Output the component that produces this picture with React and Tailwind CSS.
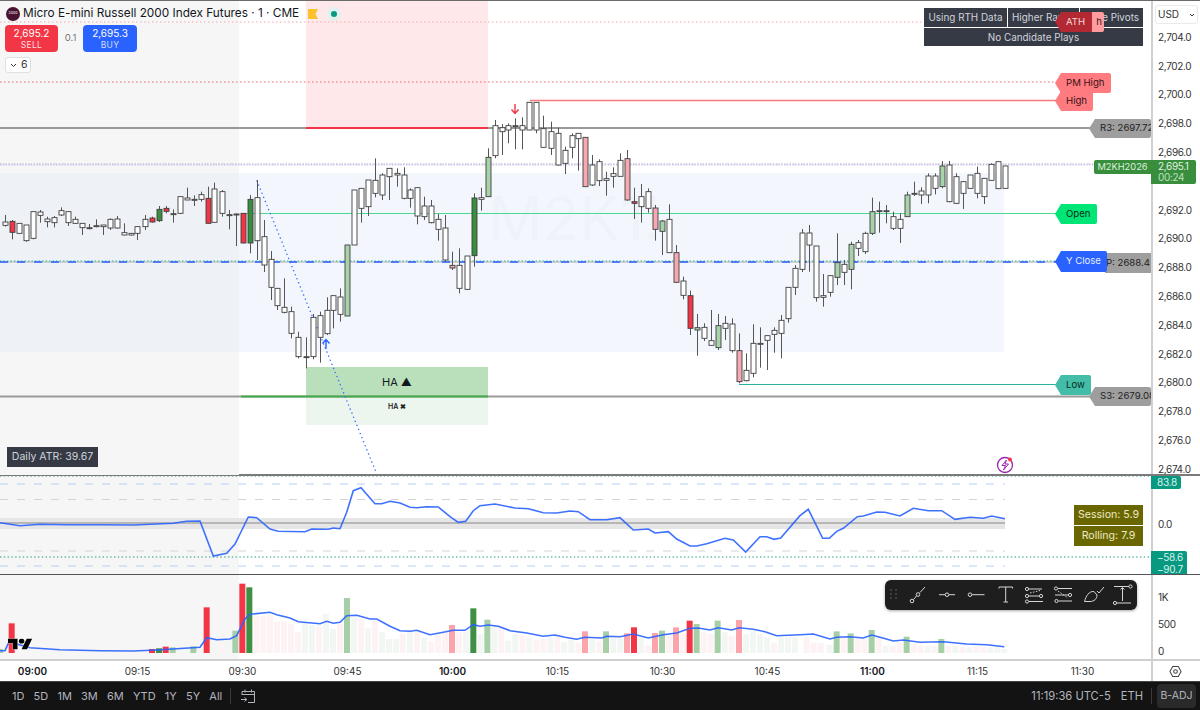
import React from 'react';

const sec = (xo, yo, rows) => rows.map(([zx, bt, bb, wt, wb, t]) => ({
  x: Math.round(xo + zx / 3) + 0.5, bt: yo + bt / 3, bb: yo + bb / 3, wt: yo + wt / 3, wb: yo + wb / 3, t: t || 'w',
}));

const candles = [
  ...sec(0, 0, [
    [15, 666, 676, 645, 680], [36, 664, 697, 660, 718, 'r'], [57, 670, 700, 670, 700], [77, 675, 722, 675, 725],
    [98, 635, 715, 635, 718], [119, 636, 646, 630, 668], [140, 657, 665, 650, 682], [161, 653, 668, 648, 682],
    [182, 632, 645, 622, 648], [204, 635, 668, 635, 678], [225, 658, 670, 650, 672], [245, 670, 683, 670, 705],
    [267, 683, 685, 672, 688], [288, 677, 679, 658, 682], [308, 675, 680, 675, 705], [329, 658, 684, 655, 690],
    [350, 657, 684, 648, 686], [371, 698, 705, 670, 706], [392, 700, 705, 700, 706], [412, 680, 700, 678, 720],
    [435, 658, 680, 645, 690], [456, 654, 666, 650, 668, 'r'], [477, 628, 662, 618, 666, 'g'], [498, 625, 634, 618, 640, 'r'],
    [519, 641, 644, 628, 668], [540, 590, 640, 590, 642], [560, 594, 600, 563, 600], [581, 598, 600, 586, 618],
    [602, 584, 598, 575, 605], [623, 595, 670, 560, 670, 'r'], [643, 567, 667, 548, 668], [665, 575, 640, 570, 650],
    [686, 644, 646, 630, 688], [708, 642, 645, 640, 738], [729, 640, 729, 640, 730, 'r'], [749, 598, 729, 585, 760, 'g'],
    [770, 593, 722, 540, 780], [791, 710, 795, 660, 816],
  ]),
  ...sec(0, 240, [
    [812, 58, 142, 33, 180], [832, 145, 197, 145, 210], [853, 202, 217, 115, 220], [874, 215, 280, 200, 295],
    [895, 292, 350, 275, 355], [917, 350, 352, 292, 385], [938, 232, 350, 222, 358], [960, 227, 292, 215, 368],
    [980, 211, 281, 172, 285], [1000, 167, 211, 167, 265], [1021, 171, 223, 145, 245], [1042, 15, 228, 15, 228, 'lg'],
  ]),
  ...sec(0, 0, [
    [1063, 570, 735, 570, 735], [1084, 565, 625, 565, 668], [1105, 540, 620, 540, 648], [1126, 541, 580, 475, 592],
    [1147, 525, 585, 520, 600], [1168, 505, 530, 505, 600], [1190, 520, 525, 505, 560],
  ]),
  ...sec(400, 80, [
    [11, 285, 355, 262, 358], [31, 330, 355, 325, 383], [52, 323, 408, 323, 433], [73, 378, 410, 350, 420],
    [94, 378, 428, 360, 430], [115, 418, 448, 402, 482], [135, 444, 540, 405, 545], [156, 556, 564, 515, 570, 'lr'],
    [177, 556, 625, 505, 640], [200, 528, 628, 528, 630], [221, 354, 527, 340, 560, 'g'], [242, 353, 358, 323, 392],
    [263, 232, 350, 205, 350, 'lg'], [284, 137, 227, 120, 235], [305, 143, 155, 132, 225], [325, 137, 150, 130, 190],
    [346, 137, 138, 115, 208], [367, 137, 150, 112, 208], [387, 67, 150, 67, 150], [408, 67, 150, 67, 160],
    [429, 146, 202, 107, 202], [452, 155, 205, 125, 225], [473, 160, 255, 143, 257], [494, 211, 250, 200, 282],
    [515, 167, 202, 160, 235], [535, 160, 176, 160, 272], [556, 172, 320, 172, 320, 'lr'], [577, 255, 315, 225, 318],
    [597, 245, 302, 238, 318], [618, 296, 301, 275, 347], [639, 281, 289, 262, 323], [660, 241, 289, 220, 289],
    [682, 236, 360, 210, 362, 'lr'], [703, 365, 370, 323, 417, 'r'], [724, 350, 380, 312, 428], [745, 335, 385, 325, 398],
    [766, 384, 448, 375, 482, 'lr'], [787, 423, 454, 420, 525, 'lg'], [808, 418, 518, 373, 518], [829, 518, 607, 495, 607, 'lr'],
    [850, 603, 646, 590, 658],
  ]),
  ...sec(400, 240, [
    [870, 167, 265, 152, 285, 'r'], [891, 263, 270, 222, 347, 'lg'], [912, 262, 295, 250, 303], [934, 302, 316, 210, 316],
    [955, 257, 323, 222, 330, 'lg'], [976, 250, 265, 228, 300], [997, 252, 332, 235, 338], [1018, 332, 425, 280, 430, 'lr'],
    [1038, 391, 422, 340, 424], [1059, 310, 400, 253, 412], [1080, 310, 311, 262, 383], [1101, 287, 301, 287, 390],
    [1122, 271, 283, 262, 338], [1143, 241, 280, 225, 355], [1165, 142, 236, 142, 248], [1186, 85, 142, 75, 165],
  ]),
  ...sec(800, 240, [
    [7, -21, 88, -33, 96], [27, -21, 15, -45, 95], [48, 18, 173, 18, 185], [69, 167, 172, 102, 200],
    [90, 107, 157, 107, 170], [111, 68, 112, -20, 135, 'lg'], [132, 73, 97, 60, 135], [153, 13, 88, 5, 148, 'lg'],
    [174, 8, 25, 0, 48], [195, -20, 35, -25, 42],
  ]),
  ...sec(800, 0, [
    [217, 635, 700, 593, 705, 'lg'], [238, 632, 633, 605, 698], [259, 632, 633, 615, 670], [280, 650, 685, 635, 690],
    [301, 658, 685, 640, 729], [322, 585, 650, 575, 650, 'lg'], [343, 580, 581, 545, 588], [363, 573, 585, 562, 612],
    [384, 528, 585, 520, 610], [405, 528, 565, 520, 583], [426, 498, 560, 483, 565, 'lg'], [447, 495, 605, 483, 607],
    [468, 530, 610, 520, 612], [489, 545, 580, 545, 627], [510, 525, 565, 525, 565], [531, 520, 580, 500, 595],
    [552, 535, 590, 535, 612], [573, 493, 541, 490, 541], [594, 485, 566, 485, 566], [615, 498, 565, 498, 565],
  ]),
];

const fills = { w: '#ffffff', r: '#f23645', lr: '#f7a9b1', g: '#388e3c', lg: '#a8d3aa' };

const pts = (xo, yo, arr) => arr.map(([x, y]) => `${(xo + x / 3).toFixed(1)},${(yo + y / 3).toFixed(1)}`);

const rsiLine = [
  ...pts(0, 470, [[0,161],[30,166],[60,170],[120,166],[200,167],[300,167],[400,168],[520,163],[560,157],[600,156],[640,261],[680,253],[705,225],[745,144],[770,146],[810,180],[835,187],[915,188],[935,180],[985,181],[1000,177],[1020,179],[1040,130],[1060,65],[1083,56],[1125,104],[1145,104],[1170,97]]),
  ...pts(400, 470, [[0,102],[30,115],[50,116],[80,113],[115,114],[150,143],[175,160],[197,157],[220,125],[240,110],[285,105],[345,117],[385,119],[430,131],[470,132],[510,126],[535,128],[570,152],[620,152],[660,146],[700,183],[745,180],[765,192],[805,188],[830,210],[870,231],[890,231],[920,224],[975,208],[1000,213],[1037,249],[1080,203],[1100,203],[1122,211],[1142,207]]),
  ...pts(800, 470, [[0,140],[25,121],[68,208],[88,208],[110,187],[130,178],[172,143],[190,141],[230,129],[255,130],[300,141],[340,118],[385,125],[425,125],[465,151],[510,145],[550,148],[575,141],[615,149]]),
].join(' ');

const volLine = [
  ...pts(0, 470, [[0,545],[15,545],[30,512],[50,525],[90,536],[180,542],[300,545],[400,546],[470,543],[600,535],[620,506],[650,512],[690,510],[710,500],[735,450],[750,436],[810,430],[830,437],[870,447],[895,458],[960,464],[980,457],[1000,463],[1020,460],[1040,440],[1070,439],[1110,450],[1130,450],[1170,472]]),
  ...pts(400, 470, [[0,485],[30,487],[50,484],[90,497],[130,490],[160,484],[195,484],[220,467],[240,472],[265,468],[295,472],[330,485],[380,492],[430,502],[465,498],[495,505],[530,511],[555,505],[605,507],[620,502],[660,503],[700,495],[745,507],[790,497],[830,492],[870,478],[895,477],[930,483],[955,476],[995,483],[1017,476],[1060,481],[1095,488],[1130,500]]),
  ...pts(800, 470, [[0,497],[40,495],[90,510],[110,505],[150,503],[190,507],[215,498],[240,505],[280,516],[310,513],[360,520],[430,518],[500,525],[560,527],[613,533]]),
].join(' ');

const volFill = { r: '#f23645', g: '#3f8f44', lr: '#fba4ac', lg: '#a6cfa8', pf: '#fdf3f4', gf: '#f2f7f3' };
const volBars = [
  ...[[0,540,'lg'],[35,463,'r'],[456,540,'r'],[477,538,'g'],[497,533,'r'],[518,535,'lg'],[540,540,'gf'],[561,540,'gf'],[580,532,'lg'],[600,535,'gf'],[620,415,'r'],[644,520,'gf'],[665,518,'pf'],[686,510,'gf'],[706,485,'lg'],[727,344,'r'],[748,355,'g'],[769,440,'pf'],[790,440,'pf'],[810,438,'pf'],[831,458,'pf'],[852,457,'pf'],[873,465,'pf'],[894,490,'pf'],[915,460,'gf'],[936,468,'gf'],[957,470,'pf'],[978,435,'gf'],[999,480,'gf'],[1020,465,'pf'],[1041,387,'lg'],[1062,445,'gf'],[1083,450,'pf'],[1104,478,'gf'],[1125,455,'pf'],[1146,490,'gf'],[1167,510,'gf'],[1188,510,'gf']].map(([x, y, c]) => [x / 3, y, c]),
  ...[[8,495,'pf'],[30,490,'gf'],[51,488,'pf'],[72,507,'gf'],[93,517,'pf'],[114,495,'pf'],[135,490,'pf'],[156,468,'lr'],[177,490,'pf'],[198,490,'gf'],[220,418,'g'],[241,495,'gf'],[262,452,'lg'],[283,470,'gf'],[304,470,'pf'],[325,515,'gf'],[346,495,'gf'],[367,500,'pf'],[388,505,'gf'],[409,512,'pf'],[430,510,'pf'],[451,505,'gf'],[472,500,'pf'],[493,520,'gf'],[514,512,'gf'],[535,520,'pf'],[555,487,'lr'],[577,510,'gf'],[598,515,'pf'],[618,487,'lg'],[640,505,'gf'],[661,510,'gf'],[681,493,'lr'],[702,475,'r'],[723,505,'gf'],[744,530,'pf'],[765,492,'lr'],[786,485,'lg'],[807,500,'pf'],[828,475,'lr'],[849,495,'pf'],[869,455,'r'],[890,465,'lg'],[911,490,'pf'],[932,495,'pf'],[953,455,'lg'],[974,490,'gf'],[995,500,'pf'],[1017,453,'lr'],[1038,495,'gf'],[1059,485,'gf'],[1080,495,'gf'],[1101,505,'gf'],[1122,520,'pf'],[1143,505,'gf'],[1164,505,'gf'],[1185,505,'gf']].map(([x, y, c]) => [400 + x / 3, y, c]),
  ...[[20,505,'pf'],[41,520,'pf'],[62,522,'pf'],[89,527,'gf'],[110,487,'lg'],[131,503,'pf'],[152,493,'lg'],[173,505,'pf'],[194,510,'pf'],[215,483,'lg'],[236,505,'pf'],[257,530,'gf'],[278,530,'pf'],[299,520,'pf'],[320,503,'lg'],[341,525,'pf'],[362,530,'pf'],[383,530,'gf'],[404,530,'pf'],[424,510,'lg'],[445,530,'pf'],[466,530,'gf'],[487,535,'pf'],[508,535,'gf'],[529,532,'pf'],[550,532,'pf'],[571,535,'gf'],[592,535,'gf'],[613,540,'gf']].map(([x, y, c]) => [800 + x / 3, y, c]),
];

function Tag({ className, fill, text, children }) {
  return (
    <div className={`absolute flex items-stretch ${className}`}>
      <svg width="6" viewBox="0 0 6 20" preserveAspectRatio="none" className="shrink-0 block">
        <polygon points="6,0 0,10 6,20" fill={fill} />
      </svg>
      <div className={`flex items-center rounded-r-[2px] text-[9.6px] whitespace-nowrap overflow-hidden ${text}`}>{children}</div>
    </div>
  );
}

const prices = ['2,704.0', '2,702.0', '2,700.0', '2,698.0', '2,696.0', '', '2,692.0', '2,690.0', '2,688.0', '2,686.0', '2,684.0', '2,682.0', '2,680.0', '2,678.0', '2,676.0', '2,674.0'];
const times = [['09:00', 1], ['09:15'], ['09:30'], ['09:45'], ['10:00', 1], ['10:15'], ['10:30'], ['10:45'], ['11:00', 1], ['11:15'], ['11:30']];
const ranges = ['1D', '5D', '1M', '3M', '6M', 'YTD', '1Y', '5Y', 'All'];

function Toolbar() {
  const s = { stroke: '#d6d6d6', strokeWidth: 1, fill: 'none' };
  return (
    <div className="absolute left-[885px] top-[5px] w-[252px] h-[30px] rounded-[6px] bg-[#1e1e1e] shadow-[0_1px_3px_rgba(0,0,0,0.35)]">
      <svg width="252" height="30" viewBox="885 581 252 30" className="block">
        {[891, 896].map(x => [591, 595, 599].map(y => <circle key={x + '-' + y} cx={x} cy={y} r="0.7" fill="#777" />))}
        <g {...s}>
          <path d="M913.5 600.5L916.5 597M920 593.5L925 588" /><circle cx="912" cy="602" r="1.8" /><circle cx="918" cy="595.5" r="1.8" />
          <path d="M939 595.7H945M949 595.7H955" /><circle cx="947" cy="595.7" r="1.8" />
          <path d="M972 595.7H984.5" /><circle cx="970" cy="595.7" r="1.8" />
          <path d="M999 589.5V588H1012.5V589.5M1005.7 588V603M1003.5 603H1008" />
          <circle cx="1027" cy="590" r="1.6" /><path d="M1029 590H1042" />
          <circle cx="1027" cy="597" r="1.6" /><circle cx="1041" cy="597" r="1.6" /><path d="M1029 597H1039" />
          <path d="M1030 594L1040 591.5" strokeDasharray="1.5 1.5" />
          <circle cx="1027" cy="602.5" r="1.6" /><path d="M1029 602.5H1043" />
          <circle cx="1056" cy="589.5" r="1.6" /><path d="M1058 589.5H1072" />
          <circle cx="1070" cy="596" r="1.6" /><path d="M1055 596H1068" />
          <path d="M1058 592L1068 599" strokeDasharray="1.5 1.5" />
          <circle cx="1056.5" cy="602" r="1.6" /><path d="M1058.5 602H1072" />
          <path d="M1084.5 602.5C1086 597 1089 592 1094 592.5L1097 596C1097 600 1094 602.5 1090 602.5Z" />
          <path d="M1097 592L1099 594L1104 588" />
          <path d="M1114 587.5H1129" /><circle cx="1130.5" cy="587.5" r="1.6" />
          <path d="M1122.5 589V602M1120.5 590.5L1122.5 588.5L1124.5 590.5" />
          <circle cx="1115" cy="604" r="1.6" /><path d="M1117 604H1131" />
        </g>
      </svg>
    </div>
  );
}

export default function App() {
  return (
    <div className="w-[1200px] h-[710px] overflow-hidden flex flex-col bg-white text-[#2a2e39] [font-family:Inter,'Liberation_Sans',sans-serif]">
      <div className="h-px bg-[#6b6b6b] shrink-0" />

      {/* Main pane */}
      <div className="flex h-[475px] shrink-0 border-b-2 border-[#7a7a7a]">
        <div className="relative w-[1151px] shrink-0">
          <svg width="1151" height="473" viewBox="0 1 1151 473" className="absolute inset-0 block overflow-visible">
            <rect x="0" y="1" width="239" height="474" fill="#f6f6f6" />
            <rect x="239" y="173" width="765" height="179" fill="#f3f7fd" />
            <rect x="0" y="173" width="239" height="179" fill="#eef2f7" />
            <rect x="306" y="1" width="182" height="127" fill="#ffe8ea" />
            <rect x="306" y="367" width="182" height="30" fill="#bae0bb" />
            <rect x="306" y="397" width="182" height="28" fill="#edf6ee" />
            <text x="575" y="240" textAnchor="middle" fontSize="60" fill="#131722" fillOpacity="0.02">M2K1!</text>
            <text x="579" y="282" textAnchor="middle" fontSize="25" fill="#131722" fillOpacity="0.02">Micro E-mini Russell 2000 Index Futures</text>

            <line x1="0" x2="1060" y1="22" y2="22" stroke="#f7a8ad" strokeDasharray="1.5 2.5" />
            <line x1="0" x2="1060" y1="82" y2="82" stroke="#f4636c" strokeDasharray="1.5 2.5" />
            <line x1="530" x2="1060" y1="100.5" y2="100.5" stroke="#f97a7e" strokeWidth="1.3" />
            <line x1="0" x2="1095" y1="128" y2="128" stroke="#999999" strokeWidth="2" />
            <line x1="306" x2="488" y1="128" y2="128" stroke="#f23645" strokeWidth="2" />
            <line x1="0" x2="1095" y1="164.5" y2="164.5" stroke="#b9c5ee" strokeWidth="2" strokeDasharray="1.4 1.4" />
            <line x1="0" x2="1095" y1="164" y2="164" stroke="#f1b9c0" strokeDasharray="1.4 2.8" />
            <line x1="241" x2="1060" y1="213.5" y2="213.5" stroke="#4cd990" />
            <line x1="0" x2="1060" y1="262" y2="262" stroke="#c4c4c4" strokeWidth="1.5" />
            <line x1="0" x2="1060" y1="261" y2="261" stroke="#26b59e" strokeDasharray="1.5 2" />
            <line x1="0" x2="1060" y1="262" y2="262" stroke="#2962ff" strokeWidth="1.5" strokeDasharray="8 9" />
            <line x1="739" x2="1060" y1="384.5" y2="384.5" stroke="#26b29d" />
            <line x1="0" x2="1095" y1="396.5" y2="396.5" stroke="#9a9a9a" strokeWidth="2" />
            <line x1="241" x2="488" y1="396.5" y2="396.5" stroke="#44ab4a" strokeWidth="2" />
            <line x1="257" x2="376" y1="181" y2="472" stroke="#3f74ff" strokeWidth="1.5" strokeLinecap="round" strokeDasharray="0.1 4.3" />

            {candles.map((c, i) => (
              <g key={i}>
                <line x1={c.x} x2={c.x} y1={c.wt} y2={c.wb} stroke="#555" strokeWidth="1" />
                <rect x={c.x - 2.5} y={c.bt} width="5" height={Math.max(c.bb - c.bt, 1)} fill={fills[c.t]} stroke="#3f3f3f" strokeWidth="0.9" />
              </g>
            ))}

            <path d="M515 104V113M511.5 109.5L515 113.5L518.5 109.5" stroke="#f23645" strokeWidth="1.4" fill="none" />
            <path d="M326 349V340M322.5 343.5L326 339.5L329.5 343.5" stroke="#2962ff" strokeWidth="1.4" fill="none" />

            <circle cx="1005" cy="465" r="7.5" fill="#fff" stroke="#9c27b0" strokeWidth="1.3" />
            <path d="M1006.5 460L1002 465.5H1005.5L1003.5 470L1008.5 464H1005Z" fill="none" stroke="#9c27b0" strokeWidth="1" />
            <circle cx="1010" cy="459.5" r="1.9" fill="#f23645" />
          </svg>

          {/* Legend */}
          <div className="absolute left-[6px] top-[5px] flex items-center h-[15px]">
            <div className="w-[14px] h-[14px] rounded-full bg-[#4a1330] flex items-center justify-center text-[3.5px] text-white">2000</div>
            <div className="ml-[3px] text-[11.8px] leading-[15px] text-[#131722] whitespace-nowrap">Micro E-mini Russell 2000 Index Futures · 1 · CME</div>
            <svg width="10" height="10" viewBox="0 0 10 10" className="ml-[9px] shrink-0"><path d="M0 0H10L7.5 5L10 10H0Z" fill="#f9c22e" /></svg>
            <div className="ml-[9px] w-[14px] h-[14px] rounded-full bg-[#e0f1ee] flex items-center justify-center"><div className="w-[6px] h-[6px] rounded-full bg-[#089981]" /></div>
          </div>

          {/* Buy sell */}
          <div className="absolute left-[5px] top-[24px] flex items-center">
            <div className="w-[53px] h-[27px] rounded-[4px] bg-[#f23645] flex flex-col items-center justify-center text-white">
              <span className="text-[10px] leading-[13px]">2,695.2</span><span className="text-[8.5px] leading-[10px] tracking-[0.3px] text-[#ffdfe2]">SELL</span>
            </div>
            <div className="w-[25px] text-center text-[9.5px] text-[#777]">0.1</div>
            <div className="w-[54px] h-[27px] rounded-[4px] bg-[#2962ff] flex flex-col items-center justify-center text-white">
              <span className="text-[10px] leading-[13px]">2,695.3</span><span className="text-[8.5px] leading-[10px] tracking-[0.3px] text-[#cddcff]">BUY</span>
            </div>
          </div>
          <div className="absolute left-[5px] top-[56px] w-[26px] h-[16px] rounded-[3px] bg-white border border-[#e0e0e0] flex items-center gap-[4px] pl-[4px] text-[10.5px] text-[#333]">
            <svg width="7" height="5" viewBox="0 0 7 5"><path d="M1 1L3.5 3.5L6 1" stroke="#333" strokeWidth="1" fill="none" /></svg>6
          </div>

          {/* Status table */}
          <div className="absolute left-[924px] top-[7px] w-[219px] h-[38px] flex flex-col gap-px bg-white text-[9.9px] text-[#d1d4dc]">
            <div className="flex gap-px h-[19px]">
              <div className="w-[83px] bg-[#363a45] flex items-center justify-center whitespace-nowrap">Using RTH Data</div>
              <div className="w-[71px] bg-[#363a45] flex items-center pl-[4px] whitespace-nowrap">Higher Rar</div>
              <div className="flex-1 bg-[#363a45] flex items-center justify-end pr-[4px] whitespace-nowrap">e Pivots</div>
            </div>
            <div className="flex-1 bg-[#363a45] flex items-center justify-center">No Candidate Plays</div>
          </div>

          <Tag className="left-[1086px] top-[11px] h-[20px]" fill="#ff9c9f" text="w-[12px] bg-[#ff9c9f] justify-end pr-[2px] text-[#3a1a1c]">h</Tag>
          <Tag className="left-[1055px] top-[11px] h-[20px]" fill="#b22833" text="w-[31px] bg-[#b22833] pl-[5px] text-[#f4d8da]">ATH</Tag>
          <Tag className="left-[1055px] top-[72px] h-[20px]" fill="#ff7b80" text="w-[50px] bg-[#ff7b80] pl-[5px] text-[#341416]">PM High</Tag>
          <Tag className="left-[1055px] top-[90px] h-[20px]" fill="#ff7b80" text="w-[32px] bg-[#ff7b80] pl-[5px] text-[#341416]">High</Tag>
          <Tag className="left-[1089px] top-[118px] h-[19px]" fill="#9e9e9e" text="w-[56px] bg-[#9e9e9e] pl-[5px] text-[#1f1f1f]">R3: 2697.72</Tag>
          <div className="absolute left-[1094px] top-[159px] w-[57px] h-[14px] bg-[#388e3c] rounded-l-[2px] flex items-center justify-center text-[9.3px] text-[#dff0df]">M2KH2026</div>
          <Tag className="left-[1055px] top-[203px] h-[20px]" fill="#00e676" text="w-[36px] bg-[#00e676] pl-[5px] text-[#0a2a18]">Open</Tag>
          <div className="absolute left-[1105px] top-[252px] w-[46px] h-[20px] bg-[#9e9e9e] flex items-center justify-end pr-px text-[9.6px] whitespace-nowrap text-[#1f1f1f]">P: 2688.4</div>
          <Tag className="left-[1055px] top-[250px] h-[21px]" fill="#2962ff" text="w-[46px] bg-[#2962ff] pl-[5px] text-[#e6ecff]">Y Close</Tag>
          <Tag className="left-[1089px] top-[386px] h-[19px]" fill="#9e9e9e" text="w-[56px] bg-[#9e9e9e] pl-[5px] text-[#1f1f1f]">S3: 2679.08</Tag>
          <Tag className="left-[1055px] top-[374px] h-[20px]" fill="#44bda8" text="w-[30px] bg-[#44bda8] pl-[5px] text-[#062a24]">Low</Tag>

          {/* HA labels */}
          <div className="absolute left-[306px] top-[374px] w-[182px] text-center text-[11px] leading-[14px] text-[#131722]">HA ▲</div>
          <div className="absolute left-[306px] top-[401px] w-[182px] text-center text-[7px] leading-[10px] font-semibold text-[#222]">HA ✖</div>

          <div className="absolute left-[7px] top-[446px] w-[91px] h-[20px] bg-[#363a45] flex items-center justify-center text-[10.5px] text-[#d1d4dc]">Daily ATR: 39.67</div>
        </div>
        <div className="relative w-[49px] shrink-0 border-l-2 border-[#d0d0d0]">
          <div className="mx-[2px] mt-[4px] h-[19px] w-[43px] rounded-[3px] bg-white border border-[#eaeaea] flex items-center justify-between px-[2px] text-[10px] text-[#333]">
            USD
            <svg width="6" height="4" viewBox="0 0 6 4"><path d="M1 1L3 3L5 1" stroke="#333" fill="none" /></svg>
          </div>
          <div className="-mt-[1px] pl-[5px] text-[10px] tracking-[-0.35px] text-[#333]">
            {prices.map((p, i) => (
              <div key={i} className="h-[28.8px] flex items-center">{p}</div>
            ))}
          </div>
          <div className="absolute -left-[2px] top-[159px] w-[45px] h-[24px] rounded-r-[2px] bg-[#388e3c] pl-[7px] flex flex-col justify-center text-[10px] tracking-[-0.35px] leading-[11.5px] text-[#e3f1e3]">
            <span>2,695.1</span><span className="text-[#bfe0c0]">00:24</span>
          </div>
        </div>
      </div>

      {/* Indicator pane */}
      <div className="flex h-[99px] shrink-0 border-b border-[#555]">
        <div className="relative w-[1151px] shrink-0">
          <svg width="1151" height="98" viewBox="0 477 1151 98" className="absolute inset-0 block">
            <rect x="0" y="476" width="239" height="100" fill="#f6f6f6" />
            <rect x="0" y="519" width="1005" height="11" fill="#e6e6e6" />
            <line x1="0" x2="1005" y1="524" y2="524" stroke="#888" strokeWidth="1.2" />
            <line x1="0" x2="1005" y1="485" y2="485" stroke="#b8ccfa" strokeDasharray="8 9" />
            <line x1="0" x2="1005" y1="500.5" y2="500.5" stroke="#d4d4d4" strokeDasharray="8 9" />
            <line x1="0" x2="1005" y1="552" y2="552" stroke="#d4d4d4" strokeDasharray="8 9" />
            <line x1="0" x2="1151" y1="558" y2="558" stroke="#1a9a84" strokeDasharray="1.4 2.4" />
            <line x1="0" x2="1005" y1="567" y2="567" stroke="#b8ccfa" strokeDasharray="8 9" />
            <line x1="0" x2="1151" y1="477" y2="477" stroke="#1a9a84" strokeDasharray="1.4 2.4" />
            <polyline points={rsiLine} fill="none" stroke="#2962ff" strokeWidth="1.6" strokeOpacity="0.9" />
          </svg>
          <div className="absolute left-[1074px] top-[29px] w-[69px] flex flex-col gap-px text-[10.6px] text-[#ece9c8]">
            <div className="h-[20px] bg-[#6b6700] flex items-center justify-center">Session: 5.9</div>
            <div className="h-[20px] bg-[#6b6700] flex items-center justify-center">Rolling: 7.9</div>
          </div>
        </div>
        <div className="relative w-[49px] shrink-0 border-l-2 border-[#d0d0d0]">
          <div className="absolute -left-[2px] top-[0px] w-[30px] h-[13px] rounded-r-[2px] bg-[#089981] pl-[6px] flex items-center text-[10px] tracking-[-0.3px] text-[#d9f2ec]">83.8</div>
          <div className="absolute left-[5px] top-[41px] h-[14px] flex items-center text-[10px] tracking-[-0.3px] text-[#333]">0.0</div>
          <div className="absolute -left-[2px] top-[75px] w-[36px] h-[23px] rounded-tr-[2px] bg-[#089981] pl-[6px] flex flex-col justify-center text-[10px] tracking-[-0.3px] leading-[12px] text-[#d9f2ec]">
            <span>−58.6</span><span>−90.7</span>
          </div>
        </div>
      </div>

      {/* Volume pane */}
      <div className="flex h-[86px] shrink-0 border-b-2 border-[#cfcfcf]">
        <div className="relative w-[1151px] shrink-0">
          <svg width="1151" height="84" viewBox="0 576 1151 84" className="absolute inset-0 block">
            <rect x="0" y="576" width="239" height="84" fill="#f6f6f6" />
            {volBars.map(([x, y, c], i) => {
              const top = 470 + y / 3;
              return <rect key={i} x={x - 3} y={top} width="6" height={654 - top} fill={volFill[c]} />;
            })}
            <polyline points={volLine} fill="none" stroke="#2962ff" strokeWidth="1.6" strokeOpacity="0.9" />
            <g transform="translate(8 637.5) scale(0.68 0.58)">
              <path d="M14 22H7V11H0V4h14v18zM28 22h-8l7.5-18h8L28 22z" fill="#000" stroke="#fff" strokeWidth="1" paintOrder="stroke" />
              <circle cx="20" cy="8" r="4" fill="#000" />
            </g>
          </svg>
          <Toolbar />
        </div>
        <div className="w-[49px] h-[84px] shrink-0 border-l-2 border-[#d0d0d0] pl-[5px] text-[10px] tracking-[-0.3px] text-[#333] pt-[9px] flex flex-col">
          <div className="h-[27px] shrink-0 flex items-center">1K</div>
          <div className="h-[27px] shrink-0 flex items-center">500</div>
          <div className="h-[27px] shrink-0 flex items-center">0</div>
        </div>
      </div>

      {/* Time axis */}
      <div className="flex h-[21px] shrink-0 border-b border-[#444]">
        <div className="w-[1151px] shrink-0 overflow-hidden">
          <div className="-ml-[20px] pt-px flex h-full items-center text-[10px] text-[#333]">
            {times.map(([t, b]) => (
              <div key={t} className={`w-[105px] shrink-0 text-center ${b ? 'font-semibold text-[#131722]' : ''}`}>{t}</div>
            ))}
          </div>
        </div>
        <div className="w-[49px] shrink-0 border-l-2 border-[#d0d0d0] flex items-center justify-center pr-[2px]">
          <svg width="13" height="13" viewBox="0 0 14 14" fill="none" stroke="#444" strokeWidth="1.1">
            <path d="M4 1.5H10L13 7L10 12.5H4L1 7Z" strokeLinejoin="round" /><circle cx="7" cy="7" r="2" />
          </svg>
        </div>
      </div>

      {/* Bottom bar */}
      <div className="flex-1 bg-[#131313] flex items-center justify-between pl-[12px] pr-[4px] text-[11px] text-[#b2b5be]">
        <div className="flex items-center">
          <div className="flex items-center gap-[9.2px]">
            {ranges.map(r => <span key={r}>{r}</span>)}
          </div>
          <div className="ml-[8px] w-px h-[16px] bg-[#3a3a3a]" />
          <svg width="16" height="16" viewBox="0 0 16 16" fill="none" stroke="#b2b5be" strokeWidth="1" className="ml-[9px]">
            <path d="M2 7V3.5H14.5V14.5H8M2 6.5H14.5M5 1.5V4.5M11.5 1.5V4.5M1 11.5H6.5M4.5 9.5L6.8 11.5L4.5 13.5" />
          </svg>
        </div>
        <div className="flex items-center text-[11.2px]">
          <span>11:19:36 UTC-5</span>
          <span className="ml-[10px]">ETH</span>
          <div className="ml-[8px] w-px h-[16px] bg-[#3a3a3a]" />
          <div className="ml-[5px] w-[39px] h-[24px] rounded-[4px] bg-[#2a2a2a] flex items-center justify-center text-[10.5px]">B-ADJ</div>
        </div>
      </div>
    </div>
  );
}
